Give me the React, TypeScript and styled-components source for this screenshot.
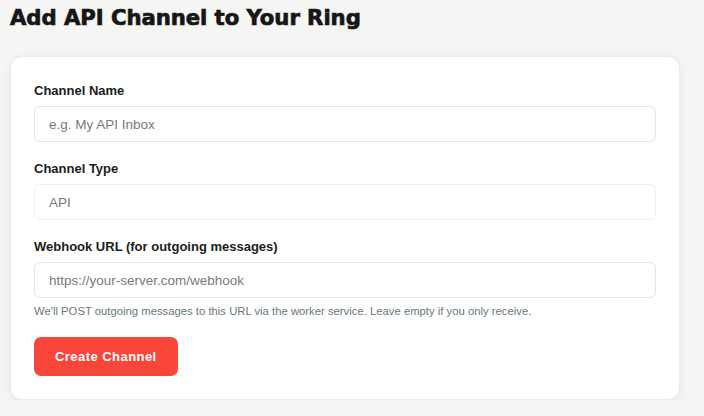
import React from "react";
import { createGlobalStyle, styled } from "styled-components";

const GlobalStyle = createGlobalStyle`
  html, body {
    margin: 0;
    padding: 0;
    background: #f5f5f3;
  }
  body {
    font-family: "Liberation Sans", Arial, sans-serif;
    color: #1a1a1a;
  }
`;

const Page = styled.div`
  padding: 6px 10px 0;
`;

const Title = styled.h1`
  margin: 0 0 26px;
  font-family: "DejaVu Sans", sans-serif;
  font-weight: 700;
  font-size: 21.2px;
  line-height: 24px;
  color: #161616;
  -webkit-text-stroke: 0.7px #161616;
  letter-spacing: -0.05px;
`;

const Card = styled.form`
  width: 670px;
  box-sizing: border-box;
  background: #fff;
  border: 1px solid #e8ecea;
  border-radius: 12px;
  box-shadow: 0 2px 8px rgba(0, 0, 0, 0.07);
  padding: 26px 23px 23px;
`;

const Field = styled.div<{ $last?: boolean }>`
  margin-bottom: ${(p) => (p.$last ? "0" : "19px")};
`;

const Label = styled.label`
  display: block;
  font-size: 13px;
  font-weight: 700;
  line-height: 16px;
  color: #1c1c1c;
  margin-bottom: 7px;
`;

const Input = styled.input<{ $muted?: boolean }>`
  display: block;
  width: 100%;
  height: 36px;
  box-sizing: border-box;
  padding: 0 14px;
  border: 1px solid ${(p) => (p.$muted ? "#eef1f0" : "#e0e7e5")};
  border-radius: 6px;
  background: #fff;
  font-family: "Liberation Sans", Arial, sans-serif;
  font-size: 13.5px;
  color: ${(p) => (p.$muted ? "#777" : "#1c1c1c")};
  outline: none;
  &::placeholder {
    color: #7a7a7a;
  }
`;

const Help = styled.p`
  margin: 6px 0 0;
  font-size: 11.3px;
  line-height: 15px;
  color: #687a77;
`;

const Button = styled.button`
  margin-top: 18px;
  height: 39px;
  padding: 0 21px;
  border: none;
  border-radius: 7px;
  background: #fa453a;
  color: #fff;
  font-family: "Liberation Sans", Arial, sans-serif;
  font-size: 13px;
  font-weight: 700;
  letter-spacing: 0.45px;
  cursor: pointer;
`;

export default function App() {
  return (
    <Page>
      <GlobalStyle />
      <Title>Add API Channel to Your Ring</Title>
      <Card onSubmit={(e) => e.preventDefault()}>
        <Field>
          <Label htmlFor="name">Channel Name</Label>
          <Input id="name" placeholder="e.g. My API Inbox" />
        </Field>
        <Field>
          <Label htmlFor="type">Channel Type</Label>
          <Input id="type" value="API" readOnly $muted />
        </Field>
        <Field $last>
          <Label htmlFor="webhook">Webhook URL (for outgoing messages)</Label>
          <Input id="webhook" placeholder="https://your-server.com/webhook" />
          <Help>
            We'll POST outgoing messages to this URL via the worker service. Leave empty if you
            only receive.
          </Help>
        </Field>
        <Button type="submit">Create Channel</Button>
      </Card>
    </Page>
  );
}
